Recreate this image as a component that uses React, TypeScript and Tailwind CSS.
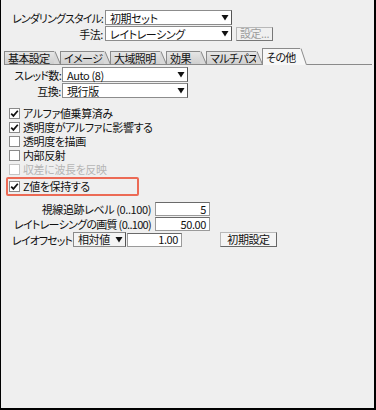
import React from "react";

const font = "font-['Noto_Sans_CJK_JP','Noto_Sans',sans-serif] [font-feature-settings:'palt'] tracking-[-0.4px]";

function Arrow() {
  return (
    <svg width="8" height="7" viewBox="0 0 8 7" className="shrink-0">
      <path d="M0.5 1h7L4 6.5z" fill="#111" />
    </svg>
  );
}

function Select({ value, w }: { value: string; w: string }) {
  return (
    <div className={`${w} h-[15px] bg-white border border-[#8c8c8c] border-r-[#555] flex items-center justify-between pl-[4px] pr-[2px] leading-none`}>
      <span className="pt-[1px]">{value}</span>
      <Arrow />
    </div>
  );
}

function Tab({ label, w, active = false }: { label: string; w: string; active?: boolean }) {
  const h = active ? "h-[17px]" : "h-[14px]";
  return (
    <div className={`flex items-end ${active ? "" : "-mr-[1px]"}`}>
      <div
        className={`${w} ${h} border-l border-t border-[#8a8a8a] flex items-center pl-[3px] leading-none whitespace-nowrap tracking-[-0.6px] ${
          active ? "bg-[#f7f7f7]" : "bg-gradient-to-b from-[#e6e6e6] to-[#cfcfcf] border-b border-b-[#8a8a8a]"
        }`}
      >
        {label}
      </div>
      <svg width="7" height={active ? 17 : 14} className="shrink-0">
        <path d={active ? "M0 0.5h1.5L7 17H0z" : "M0 0.5h1.5L7 14H0z"} fill={active ? "#f7f7f7" : "#d8d8d8"} />
        <path d={active ? "M1 0.5L6.5 17" : "M1 0.5L6.5 13.5"} stroke="#8a8a8a" strokeWidth="1" fill="none" />
        {!active && <path d="M0 13.5h7" stroke="#8a8a8a" />}
      </svg>
    </div>
  );
}

function Check({ label, checked = false, disabled = false }: { label: string; checked?: boolean; disabled?: boolean }) {
  return (
    <div className="flex items-center h-[14px] gap-[3px] whitespace-nowrap leading-none">
      <div className={`w-[11px] h-[11px] bg-white border ${disabled ? "border-[#c4c4c4]" : "border-[#8a8a8a]"} flex items-center justify-center`}>
        {checked && (
          <svg width="9" height="9" viewBox="0 0 9 9">
            <path d="M1.2 4.6l2.2 2.3L7.8 1.8" stroke="#111" strokeWidth="1.7" fill="none" />
          </svg>
        )}
      </div>
      <span className={disabled ? "text-[#b5b5b5]" : ""}>{label}</span>
    </div>
  );
}

function NumInput({ value, w }: { value: string; w: string }) {
  return (
    <div className={`${w} h-[14px] bg-white border border-[#9a9a9a] border-t-[#6a6a6a] flex items-center justify-end pr-[3px] leading-none`}>
      {value}
    </div>
  );
}

export default function App() {
  return (
    <div className={`w-[376px] h-[410px] bg-[#efefef] border-l border-r-2 border-b-2 border-black text-[11px] leading-[14px] text-[#111] whitespace-nowrap ${font}`}>
      {/* rendering style */}
      <div className="pt-[10px] flex flex-col gap-[1px]">
        <div className="flex items-center">
          <div className="w-[103px] text-right pr-[1px] tracking-[-0.9px]">レンダリングスタイル:</div>
          <Select value="初期セット" w="w-[127px] ml-[1px]" />
        </div>
        <div className="flex items-center">
          <div className="w-[103px] text-right pr-[1px]">手法:</div>
          <Select value="レイトレーシング" w="w-[127px] ml-[1px]" />
          <div className="ml-[4px] h-[14px] w-[37px] border border-[#b8b8b8] border-r-[#777] border-b-[#777] bg-[#f0f0f0] text-[#9c9c9c] flex items-center justify-center leading-none">
            設定...
          </div>
        </div>
      </div>

      {/* tabs */}
      <div className="mt-[7px] pl-[3px] flex items-end">
        <Tab label="基本設定" w="w-[50px]" />
        <Tab label="イメージ" w="w-[44px]" />
        <Tab label="大域照明" w="w-[50px]" />
        <Tab label="効果" w="w-[34px]" />
        <Tab label="マルチパス" w="w-[50px]" />
        <Tab label="その他" w="w-[38px]" active />
        <div className="flex-1 mr-[2px] border-b border-[#8a8a8a]" />
      </div>

      {/* thread / compat */}
      <div className="mt-[2px] flex flex-col gap-[1px]">
        <div className="flex items-center">
          <div className="w-[60px] text-right tracking-[-0.7px]">スレッド数:</div>
          <Select value="Auto (8)" w="w-[126px] ml-[1px]" />
        </div>
        <div className="flex items-center">
          <div className="w-[60px] text-right">互換:</div>
          <Select value="現行版" w="w-[126px] ml-[1px]" />
        </div>
      </div>

      {/* checkboxes */}
      <div className="mt-[8px] pl-[8px] flex flex-col">
        <Check label="アルファ値乗算済み" checked />
        <Check label="透明度がアルファに影響する" checked />
        <Check label="透明度を描画" />
        <Check label="内部反射" />
        <Check label="収差に波長を反映" disabled />
      </div>
      <div className="ml-[5px] mt-[1px] w-[133px] h-[19px] border-2 border-[#ec6a55] rounded-[2px] flex items-center pl-[1px]">
        <Check label="Z値を保持する" checked />
      </div>

      {/* numeric rows */}
      <div className="mt-[6px] flex flex-col gap-[1px]">
        <div className="flex items-center">
          <div className="w-[150px] text-right">視線追跡レベル (0..100)</div>
          <NumInput value="5" w="w-[55px] ml-[4px]" />
        </div>
        <div className="flex items-center">
          <div className="w-[150px] text-right tracking-[-0.7px]">レイトレーシングの画質 (0..100)</div>
          <NumInput value="50.00" w="w-[55px] ml-[4px]" />
        </div>
        <div className="flex items-center">
          <div className="pl-[11px] w-[71px] tracking-[-0.9px]">レイオフセット</div>
          <div className="w-[53px] h-[15px] ml-[1px] border border-[#8a8a8a] border-r-[#555] bg-[#f4f4f4] flex items-center justify-between pl-[4px] pr-[2px] leading-none">
            <span>相対値</span>
            <Arrow />
          </div>
          <NumInput value="1.00" w="w-[55px] ml-[1px]" />
          <div className="ml-[38px] h-[15px] w-[57px] border border-[#b8b8b8] border-r-[#666] border-b-[#666] bg-[#f4f4f4] flex items-center justify-center leading-none">
            初期設定
          </div>
        </div>
      </div>
    </div>
  );
}
